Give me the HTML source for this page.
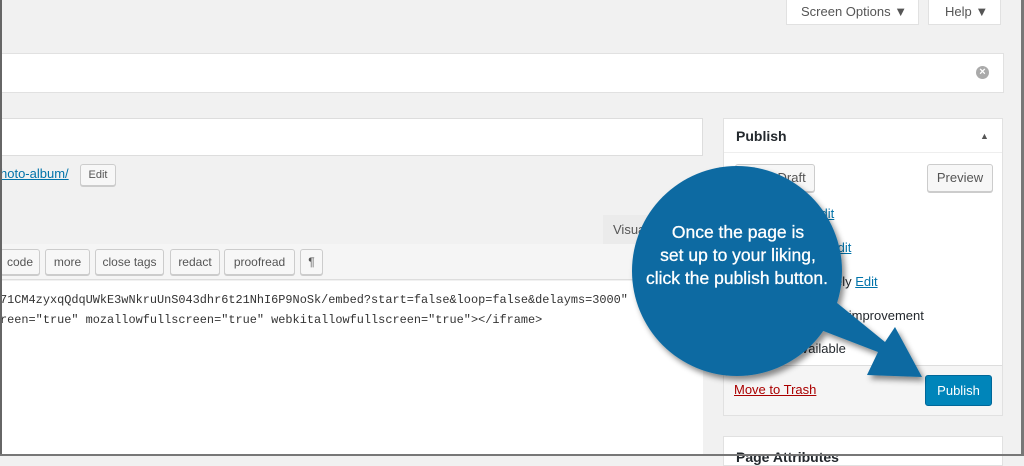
<!DOCTYPE html>
<html><head><style>
body{margin:0;width:1024px;height:456px;overflow:hidden;background:#f1f1f1;font-family:"Liberation Sans",sans-serif;position:relative;font-size:13px;color:#23282d}
.a{position:absolute;box-sizing:border-box}
.w{background:#fff;border:1px solid #e1e1e1}
.btn{background:#f7f7f7;border:1px solid #ccc;border-radius:3px;color:#555;font-size:12px;text-align:center;box-shadow:0 1px 0 #ccc}
a{color:#0073aa;text-decoration:underline}
.mono{font-family:"Liberation Mono",monospace;font-size:11.9px;color:#333}
</style></head><body>
<div class="a w" style="left:786px;top:-1px;width:133px;height:26px;color:#555;padding:4px 0 0 14px">Screen Options &#9660;</div>
<div class="a w" style="left:928px;top:-1px;width:73px;height:26px;color:#555;padding:4px 0 0 16px">Help &#9660;</div>
<div class="a w" style="left:0;top:53px;width:1004px;height:40px"></div>
<div class="a" style="left:976px;top:66px;width:13px;height:13px;border-radius:50%;background:#aaa;color:#fff;font-size:11px;line-height:13px;text-align:center;font-weight:bold">×</div>
<div class="a w" style="left:0;top:118px;width:703px;height:38px;border-color:#ddd"></div>
<div class="a" style="left:0;top:166px"><a>hoto-album/</a></div>
<div class="a btn" style="left:80px;top:164px;width:36px;height:22px;line-height:20px;font-size:11px">Edit</div>
<div class="a" style="left:603px;top:215px;width:100px;height:30px;background:#ebebeb;color:#555;padding:7px 10px">Visual</div>
<div class="a" style="left:0;top:244px;width:703px;height:36px;background:#f5f5f5;border-bottom:1px solid #ddd"></div>
<div class="a btn" style="left:0;top:249px;width:40px;height:26px;line-height:24px">code</div>
<div class="a btn" style="left:45px;top:249px;width:45px;height:26px;line-height:24px">more</div>
<div class="a btn" style="left:95px;top:249px;width:69px;height:26px;line-height:24px">close tags</div>
<div class="a btn" style="left:170px;top:249px;width:50px;height:26px;line-height:24px">redact</div>
<div class="a btn" style="left:224px;top:249px;width:71px;height:26px;line-height:24px">proofread</div>
<div class="a btn" style="left:300px;top:249px;width:23px;height:26px;line-height:24px">¶</div>
<div class="a" style="left:0;top:281px;width:703px;height:175px;background:#fff"></div>
<div class="a mono" style="left:0;top:293px;white-space:pre">71CM4zyxqQdqUWkE3wNkruUnS043dhr6t21NhI6P9NoSk/embed?start=false&amp;loop=false&amp;delayms=3000"</div>
<div class="a mono" style="left:0;top:313px;white-space:pre">reen="true" mozallowfullscreen="true" webkitallowfullscreen="true"&gt;&lt;/iframe&gt;</div>
<div class="a w" style="left:723px;top:118px;width:280px;height:298px"></div>
<div class="a" style="left:724px;top:152px;width:278px;height:1px;background:#eee"></div>
<div class="a" style="left:736px;top:128px;font-weight:bold;font-size:14px">Publish</div>
<div class="a" style="left:980px;top:131px;font-size:9px;color:#555">▲</div>
<div class="a btn" style="left:735px;top:164px;width:80px;height:28px;line-height:26px;font-size:13px">Save Draft</div>
<div class="a btn" style="left:927px;top:164px;width:66px;height:28px;line-height:26px;font-size:13px">Preview</div>
<div class="a" style="left:736px;top:206px">Status: Draft <a>Edit</a></div>
<div class="a" style="left:736px;top:240px">Visibility: Public <a>Edit</a></div>
<div class="a" style="left:736px;top:274px">Publish immediately <a>Edit</a></div>
<div class="a" style="left:736px;top:308px">Readability: Needs improvement</div>
<div class="a" style="left:736px;top:341px">SEO: Not available</div>
<div class="a" style="left:724px;top:365px;width:278px;height:50px;background:#f5f5f5;border-top:1px solid #ddd"></div>
<div class="a" style="left:734px;top:382px"><a style="color:#a00">Move to Trash</a></div>
<div class="a" style="left:925px;top:375px;width:67px;height:31px;background:#0085ba;border:1px solid #006799;border-radius:3px;color:#fff;text-align:center;line-height:29px">Publish</div>
<div class="a w" style="left:723px;top:436px;width:280px;height:30px;padding:12px 12px;font-weight:bold;font-size:14px">Page Attributes</div>
<svg class="a" style="left:0;top:0" width="1024" height="456">
<defs><filter id="s"><feDropShadow dx="3" dy="4" stdDeviation="3" flood-color="#000" flood-opacity=".45"/></filter></defs>
<g filter="url(#s)" fill="#0b6aa2">
<circle cx="737" cy="271" r="105"/>
<polygon points="800,322 878,352 867,375 922,377 895,327 885,342 815,285"/>
</g>
<g fill="#fff" font-family="Liberation Sans,sans-serif" font-size="17.5" text-anchor="middle" stroke="#fff" stroke-width="0.3">
<text x="738" y="238">Once the page is</text>
<text x="738" y="261">set up to your liking,</text>
<text x="737" y="284">click the publish button.</text>
</g>
</svg>
<div class="a" style="left:0;top:0;width:2px;height:456px;background:#666"></div>
<div class="a" style="left:1021px;top:0;width:3px;height:456px;background:#777"></div>
<div class="a" style="left:0;top:454px;width:1024px;height:2px;background:#777"></div>
</body></html>
